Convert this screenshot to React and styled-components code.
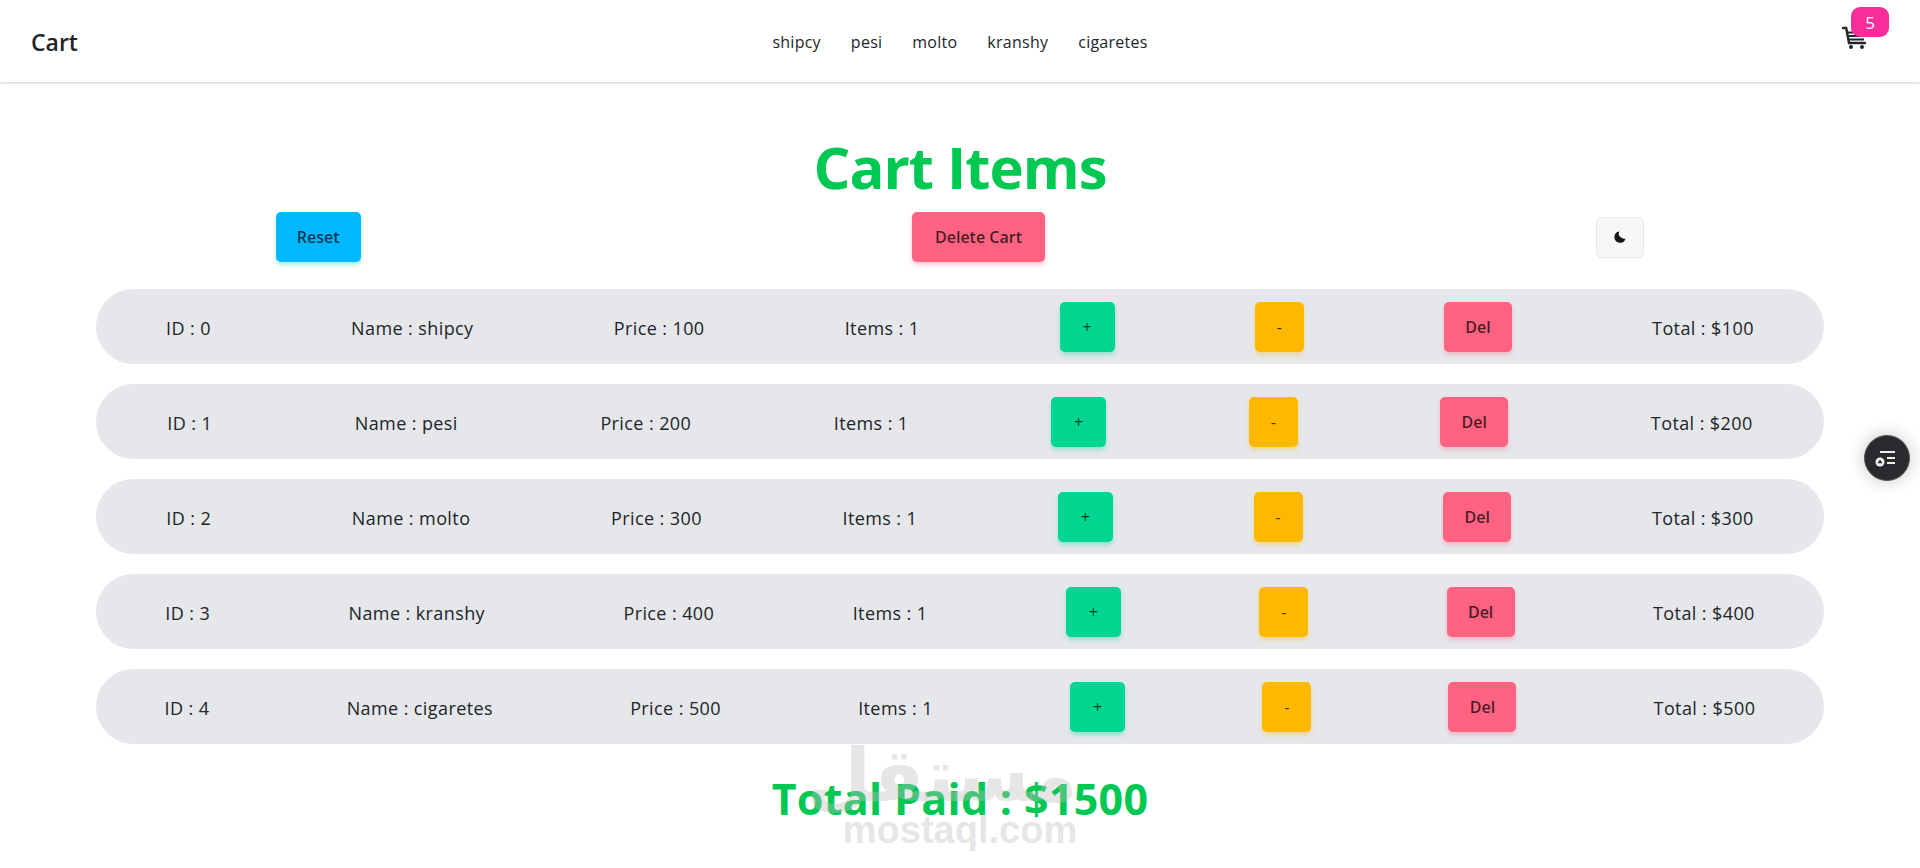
import React from "react";
import styled, { createGlobalStyle } from "styled-components";

const items = [
  { id: 0, name: "shipcy", price: 100 },
  { id: 1, name: "pesi", price: 200 },
  { id: 2, name: "molto", price: 300 },
  { id: 3, name: "kranshy", price: 400 },
  { id: 4, name: "cigaretes", price: 500 },
];

const GlobalStyle = createGlobalStyle`
  * {
    box-sizing: border-box;
  }
  html, body {
    margin: 0;
    height: 100%;
    overflow: hidden;
    background: #fff;
    font-family: "Open Sans", "Noto Sans", sans-serif;
    color: #212529;
  }
`;

const CartIcon = () => (
  <svg width="24" height="24" viewBox="0 0 24 24" fill="none">
    <path d="M1 2h3.200l2.800 15h16" stroke="#212529" strokeWidth="2.400" strokeLinecap="round" />
    <path d="M6 6.500h17M6.500 10h16M7 13.500h15" stroke="#212529" strokeWidth="2" />
    <circle cx="9" cy="21" r="2" fill="#212529" />
    <circle cx="20" cy="21" r="2" fill="#212529" />
  </svg>
);

const MoonIcon = () => (
  <svg width="12" height="12" viewBox="0 0 12 12">
    <path d="M5.400.4a5.700 5.700 0 1 0 6.200 7.200 4.300 4.300 0 0 1-3.700-.6A4.400 4.400 0 0 1 5.400.4z" fill="#16161a" />
  </svg>
);

const ToolsIcon = () => (
  <svg width="24" height="24" viewBox="0 0 24 24" fill="none">
    <path d="M5 6h15M12 12h8M12 17h8" stroke="#efefef" strokeWidth="1.800" />
    <circle cx="5" cy="16" r="4.500" fill="#f2f2f2" />
    <path d="M5 13.500l2.500 3.800h-5z" fill="#2a2a2e" />
  </svg>
);

export default function App() {
  return (
    <>
      <GlobalStyle />
      <Navbar>
        <Brand>Cart</Brand>
        <NavLinks>
          {items.map((item) => (
            <NavLink key={item.id}>{item.name}</NavLink>
          ))}
        </NavLinks>
        <CartButton>
          <CartIcon />
          <Badge>5</Badge>
        </CartButton>
      </Navbar>
      <Main>
        <Title>Cart Items</Title>
        <Actions>
          <ActionButton $bg="#00b8ff" $shadow="rgba(0, 214, 143, 0.35)" $width={85}>Reset</ActionButton>
          <ActionButton $bg="#ff6381" $shadow="rgba(255, 99, 129, 0.35)" $width={133}>Delete Cart</ActionButton>
          <ThemeButton><MoonIcon /></ThemeButton>
        </Actions>
        <List>
          {items.map((item) => (
            <Row key={item.id}>
              <Cell>ID : {item.id}</Cell>
              <Cell>Name : {item.name}</Cell>
              <Cell>Price : {item.price}</Cell>
              <Cell>Items : 1</Cell>
              <SmallButton $bg="#00d68f" $shadow="rgba(0, 214, 143, 0.35)" $width={55}>+</SmallButton>
              <SmallButton $bg="#ffb800" $shadow="rgba(255, 184, 0, 0.35)" $width={49}>-</SmallButton>
              <SmallButton $bg="#ff6381" $shadow="rgba(255, 99, 129, 0.35)" $width={68} $big>Del</SmallButton>
              <Cell>Total : ${item.price}</Cell>
            </Row>
          ))}
        </List>
        <TotalPaid>Total Paid : $1500</TotalPaid>
      </Main>
      <Watermark>
        <WatermarkArabic>مستقل</WatermarkArabic>
        <WatermarkLatin>mostaql.com</WatermarkLatin>
      </Watermark>
      <FloatButton><ToolsIcon /></FloatButton>
    </>
  );
}

const Navbar = styled.nav`
  position: relative;
  height: 82px;
  padding: 0 31px;
  display: grid;
  grid-template-columns: 1fr auto 1fr;
  align-items: center;
  background: #fff;
  box-shadow: 0 1px 3px rgba(0, 0, 0, 0.2);
`;

const Brand = styled.div`
  font-size: 23px;
  font-weight: 600;
  padding-top: 1px;
`;

const NavLinks = styled.div`
  display: flex;
  gap: 30px;
  padding-top: 1px;
`;

const NavLink = styled.a`
  font-size: 16px;
  letter-spacing: 0.25px;
  color: #212529;
`;

const CartButton = styled.div`
  position: relative;
  justify-self: end;
  width: 24px;
  height: 24px;
  margin-right: 23px;
  margin-top: -6px;
`;

const Badge = styled.span`
  position: absolute;
  left: 9px;
  top: -19px;
  width: 38px;
  height: 30px;
  border-radius: 9px;
  background: #f72d9c;
  color: #fff;
  font-size: 17px;
  display: flex;
  align-items: center;
  justify-content: center;
`;

const Main = styled.main`
  display: flex;
  flex-direction: column;
  align-items: center;
`;

const Title = styled.h1`
  margin: 44px 0 0;
  height: 86px;
  line-height: 82px;
  font-size: 58px;
  font-weight: 700;
  letter-spacing: -1px;
  color: #00c853;
`;

const Actions = styled.div`
  width: 100%;
  display: flex;
  justify-content: space-around;
  align-items: center;
`;

const ActionButton = styled.button`
  width: ${({ $width }) => $width}px;
  height: 50px;
  border: none;
  border-radius: 5px;
  font-family: inherit;
  font-size: 16px;
  font-weight: 600;
  color: rgba(0, 0, 0, 0.72);
  background: ${({ $bg }) => $bg};
  box-shadow: 0 3px 4px ${({ $shadow }) => $shadow};
`;

const ThemeButton = styled.button`
  width: 48px;
  height: 41px;
  padding: 0;
  display: flex;
  align-items: center;
  justify-content: center;
  border: 1px solid #e8e8e8;
  border-radius: 5px;
  background: #f7f7f7;
`;

const List = styled.div`
  width: 1728px;
  margin-top: 27px;
  display: flex;
  flex-direction: column;
  gap: 20px;
`;

const Row = styled.div`
  height: 75px;
  border-radius: 38px;
  background: #e5e7eb;
  display: flex;
  align-items: center;
  justify-content: space-around;
`;

const Cell = styled.div`
  font-size: 18px;
  letter-spacing: 0.4px;
  padding-top: 2px;
  color: #212529;
`;

const SmallButton = styled.button`
  width: ${({ $width }) => $width}px;
  height: 50px;
  padding: 0;
  border: none;
  border-radius: 5px;
  font-family: inherit;
  font-size: 16px;
  font-weight: ${({ $big }) => ($big ? 600 : 400)};
  color: rgba(0, 0, 0, 0.72);
  background: ${({ $bg }) => $bg};
  box-shadow: 0 3px 4px ${({ $shadow }) => $shadow};
`;

const TotalPaid = styled.div`
  margin-top: 26px;
  font-size: 43px;
  line-height: 58px;
  font-weight: 700;
  letter-spacing: 0.3px;
  color: #00c853;
`;

const Watermark = styled.div`
  position: absolute;
  left: 830px;
  top: 736px;
  width: 260px;
  display: flex;
  flex-direction: column;
  align-items: center;
  color: rgba(190, 190, 190, 0.38);
  font-family: "DejaVu Sans", sans-serif;
  font-weight: 700;
  pointer-events: none;
`;

const WatermarkArabic = styled.div`
  font-size: 74px;
  line-height: 78px;
  margin-right: 36px;
`;

const WatermarkLatin = styled.div`
  margin-top: -4px;
  font-family: "Liberation Sans", sans-serif;
  font-size: 38px;
  line-height: 40px;
`;

const FloatButton = styled.div`
  position: absolute;
  left: 1864px;
  top: 435px;
  width: 46px;
  height: 46px;
  border-radius: 50%;
  background: #2a2a2e;
  border: 1px solid #555;
  box-shadow: 0 0 18px rgba(0, 0, 0, 0.22);
  display: flex;
  align-items: center;
  justify-content: center;
`;
